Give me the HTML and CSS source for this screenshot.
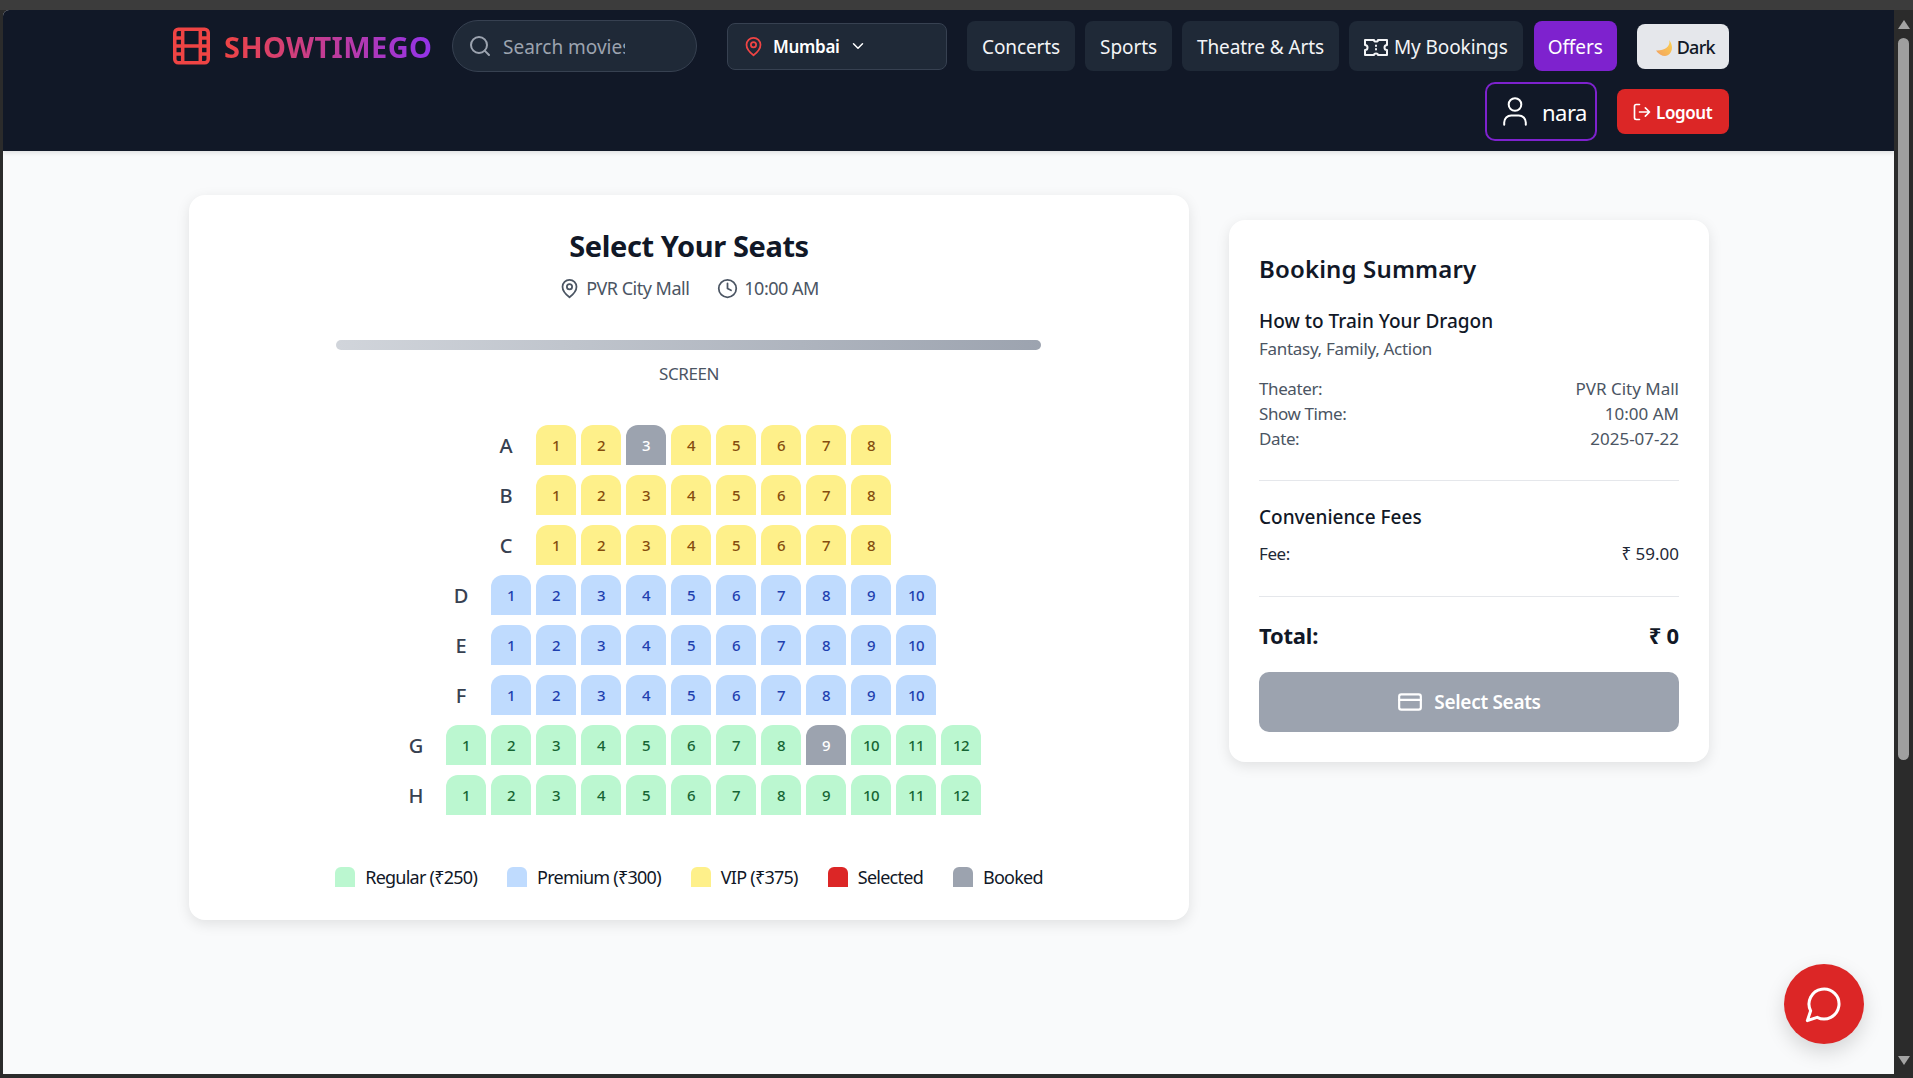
FILE: index.html
```html
<!DOCTYPE html>
<html lang="en">
<head>
    <meta charset="UTF-8">
    <meta name="viewport" content="width=device-width, initial-scale=1.0">
    <title>ShowTimeGo - Select Seats</title>
    <link rel="stylesheet" href="styles.css">
</head>
<body>
<div class="window">
    <div class="window-body">
        <div class="page">
            <!-- Navbar -->
            <header class="navbar">
                <div class="nav-row">
                    <a class="logo" href="#">
                        <svg class="logo-icon" viewBox="1.5 1.5 21 21"><rect x="2.5" y="2.5" width="19" height="19" rx="2"/><path d="M7 3v18M17 3v18M3 12h18M3 7.5h4M3 16.5h4M17 7.5h4M17 16.5h4"/></svg>
                        <span class="logo-text">SHOWTIMEGO</span>
                    </a>
                    <label class="search">
                        <svg class="icon search-icon" viewBox="0 0 24 24"><circle cx="11" cy="11" r="8"/><path d="m21 21-4.35-4.35"/></svg>
                        <input type="text" placeholder="Search movies...">
                    </label>
                    <div class="location">
                        <svg class="icon pin-red" viewBox="0 0 24 24"><path d="M20 10c0 6-8 12-8 12s-8-6-8-12a8 8 0 0 1 16 0Z"/><circle cx="12" cy="10" r="3"/></svg>
                        <span class="location-name">Mumbai</span>
                        <svg class="icon chevron" viewBox="0 0 24 24"><path d="m6 9 6 6 6-6"/></svg>
                    </div>
                    <nav class="nav-links">
                        <a class="nav-link" href="#">Concerts</a>
                        <a class="nav-link" href="#">Sports</a>
                        <a class="nav-link" href="#">Theatre &amp; Arts</a>
                        <a class="nav-link" href="#">
                            <svg class="icon ticket" viewBox="0 0 24 17"><path d="M1 1h9a2 1.6 0 0 0 4 0h9v5a2.5 2.5 0 0 0 0 5v5h-9a2 1.6 0 0 0-4 0H1v-5a2.5 2.5 0 0 0 0-5Z"/><path d="M12 6.5v.6M12 10v.6"/></svg>
                            My Bookings
                        </a>
                        <a class="nav-link nav-offers" href="#">Offers</a>
                    </nav>
                    <button class="theme-btn">
                        <svg class="moon" viewBox="0 0 18 16"><defs><linearGradient id="moonfill" x1="1" y1="0" x2="0" y2="1"><stop offset="0" stop-color="#fcd34d"/><stop offset="1" stop-color="#f2a062"/></linearGradient></defs><path d="M13 0C15 5 10 11 0 10.5 2 14 6 16 9 16 15 16 19 7 13 0Z" fill="url(#moonfill)"/></svg>
                        Dark
                    </button>
                </div>
                <div class="nav-row nav-row-user">
                    <a class="user-chip" href="#">
                        <svg class="icon user-icon" viewBox="0 0 24 29"><circle cx="12" cy="7.5" r="6.3"/><path d="M1.2 27.8v-2.4a7 7 0 0 1 7-7h7.6a7 7 0 0 1 7 7v2.4"/></svg>
                        nara
                    </a>
                    <button class="logout-btn">
                        <svg class="icon logout-icon" viewBox="0 0 24 24"><path d="M9 21H5a2 2 0 0 1-2-2V5a2 2 0 0 1 2-2h4"/><path d="m16 17 5-5-5-5M21 12H9"/></svg>
                        Logout
                    </button>
                </div>
            </header>

            <main class="content">
                <!-- Seat map -->
                <section class="seat-card">
                    <h1 class="seat-title">Select Your Seats</h1>
                    <div class="seat-meta">
                        <span class="meta-item"><svg class="icon meta-icon" viewBox="0 0 24 24"><path d="M20 10c0 6-8 12-8 12s-8-6-8-12a8 8 0 0 1 16 0Z"/><circle cx="12" cy="10" r="3"/></svg>PVR City Mall</span>
                        <span class="meta-item"><svg class="icon meta-icon" viewBox="0 0 24 24"><circle cx="12" cy="12" r="10"/><path d="M12 6v6l4 2"/></svg>10:00 AM</span>
                    </div>
                    <div class="screen-bar"></div>
                    <div class="screen-label">SCREEN</div>

                    <div class="seat-rows">
                        <div class="seat-row"><span class="row-label">A</span><div class="seats vip"><span class="seat">1</span><span class="seat">2</span><span class="seat booked">3</span><span class="seat">4</span><span class="seat">5</span><span class="seat">6</span><span class="seat">7</span><span class="seat">8</span></div></div>
                        <div class="seat-row"><span class="row-label">B</span><div class="seats vip"><span class="seat">1</span><span class="seat">2</span><span class="seat">3</span><span class="seat">4</span><span class="seat">5</span><span class="seat">6</span><span class="seat">7</span><span class="seat">8</span></div></div>
                        <div class="seat-row"><span class="row-label">C</span><div class="seats vip"><span class="seat">1</span><span class="seat">2</span><span class="seat">3</span><span class="seat">4</span><span class="seat">5</span><span class="seat">6</span><span class="seat">7</span><span class="seat">8</span></div></div>
                        <div class="seat-row"><span class="row-label">D</span><div class="seats premium"><span class="seat">1</span><span class="seat">2</span><span class="seat">3</span><span class="seat">4</span><span class="seat">5</span><span class="seat">6</span><span class="seat">7</span><span class="seat">8</span><span class="seat">9</span><span class="seat">10</span></div></div>
                        <div class="seat-row"><span class="row-label">E</span><div class="seats premium"><span class="seat">1</span><span class="seat">2</span><span class="seat">3</span><span class="seat">4</span><span class="seat">5</span><span class="seat">6</span><span class="seat">7</span><span class="seat">8</span><span class="seat">9</span><span class="seat">10</span></div></div>
                        <div class="seat-row"><span class="row-label">F</span><div class="seats premium"><span class="seat">1</span><span class="seat">2</span><span class="seat">3</span><span class="seat">4</span><span class="seat">5</span><span class="seat">6</span><span class="seat">7</span><span class="seat">8</span><span class="seat">9</span><span class="seat">10</span></div></div>
                        <div class="seat-row"><span class="row-label">G</span><div class="seats regular"><span class="seat">1</span><span class="seat">2</span><span class="seat">3</span><span class="seat">4</span><span class="seat">5</span><span class="seat">6</span><span class="seat">7</span><span class="seat">8</span><span class="seat booked">9</span><span class="seat">10</span><span class="seat">11</span><span class="seat">12</span></div></div>
                        <div class="seat-row"><span class="row-label">H</span><div class="seats regular"><span class="seat">1</span><span class="seat">2</span><span class="seat">3</span><span class="seat">4</span><span class="seat">5</span><span class="seat">6</span><span class="seat">7</span><span class="seat">8</span><span class="seat">9</span><span class="seat">10</span><span class="seat">11</span><span class="seat">12</span></div></div>
                    </div>

                    <div class="legend">
                        <span class="legend-item"><i class="swatch sw-regular"></i>Regular (₹250)</span>
                        <span class="legend-item"><i class="swatch sw-premium"></i>Premium (₹300)</span>
                        <span class="legend-item"><i class="swatch sw-vip"></i>VIP (₹375)</span>
                        <span class="legend-item"><i class="swatch sw-selected"></i>Selected</span>
                        <span class="legend-item"><i class="swatch sw-booked"></i>Booked</span>
                    </div>
                </section>

                <!-- Summary -->
                <aside class="summary-card">
                    <h2 class="summary-title">Booking Summary</h2>
                    <h3 class="movie-name">How to Train Your Dragon</h3>
                    <p class="movie-genre">Fantasy, Family, Action</p>
                    <div class="details">
                        <div class="detail-row"><span>Theater:</span><span>PVR City Mall</span></div>
                        <div class="detail-row"><span>Show Time:</span><span>10:00 AM</span></div>
                        <div class="detail-row"><span>Date:</span><span>2025-07-22</span></div>
                    </div>
                    <div class="fees">
                        <h3 class="fees-title">Convenience Fees</h3>
                        <div class="detail-row fee-row"><span>Fee:</span><span>₹ 59.00</span></div>
                    </div>
                    <div class="total-row"><span>Total:</span><span>₹ 0</span></div>
                    <button class="pay-btn">
                        <svg class="icon card-icon" viewBox="0 0 24 24"><rect x="2" y="5" width="20" height="14" rx="2"/><path d="M2 10h20"/></svg>
                        Select Seats
                    </button>
                </aside>
            </main>

            <button class="chat-btn"><svg class="icon chat-icon" viewBox="0 0 24 24"><path d="M7.9 20A9 9 0 1 0 4 16.1L2 22Z"/></svg></button>
        </div>

        <!-- Browser scrollbar -->
        <div class="scrollbar">
            <span class="arrow-up"></span>
            <span class="thumb"></span>
            <span class="arrow-down"></span>
        </div>
    </div>
</div>
</body>
</html>
```

FILE: styles.css
```css
* {
    box-sizing: border-box;
}

body, html {
    margin: 0;
    padding: 0;
    height: 100%;
    overflow: hidden;
    font-family: "Noto Sans", Arial, sans-serif;
    background-color: #2b2b2b;
}

h1, h2, h3, p {
    margin: 0;
}

a {
    text-decoration: none;
    color: inherit;
}

button {
    font-family: inherit;
    border: none;
}

.icon {
    fill: none;
    stroke: currentColor;
    stroke-width: 2;
    stroke-linecap: round;
    stroke-linejoin: round;
    flex-shrink: 0;
}

/* Window frame */
.window {
    height: 1078px;
    padding: 10px 0 4px 3px;
    background: linear-gradient(#3c3c3c 0, #3c3c3c 10px, #2b2b2b 10px);
}

.window-body {
    display: flex;
    height: 100%;
}

.page {
    position: relative;
    width: 1891px;
    height: 100%;
    background-color: #f9fafb;
    overflow: hidden;
    border-top-left-radius: 6px;
}

/* Scrollbar */
.scrollbar {
    flex: 1;
    display: flex;
    flex-direction: column;
    align-items: center;
    padding-top: 10px;
}

.arrow-up {
    width: 0;
    height: 0;
    border-left: 6px solid transparent;
    border-right: 6px solid transparent;
    border-bottom: 9px solid #a3a3a3;
}

.thumb {
    width: 11px;
    height: 722px;
    margin-top: 9px;
    border-radius: 6px;
    background-color: #9f9f9f;
}

.arrow-down {
    width: 0;
    height: 0;
    margin-top: auto;
    margin-bottom: 9px;
    border-left: 6px solid transparent;
    border-right: 6px solid transparent;
    border-top: 9px solid #a3a3a3;
}

/* Navbar */
.navbar {
    height: 141px;
    padding: 10px 165px 10px 170px;
    background-color: #111827;
    box-shadow: 0 2px 4px rgba(0, 0, 0, 0.1);
    color: #fff;
}

.nav-row {
    display: flex;
    align-items: center;
    height: 52px;
}

.nav-row-user {
    height: 59px;
    margin-top: 10px;
    justify-content: flex-end;
    gap: 20px;
}

.logo {
    display: flex;
    align-items: center;
    gap: 14px;
    width: 259px;
}

.logo-icon {
    width: 37px;
    height: 38px;
    fill: none;
    stroke: #ef4444;
    stroke-width: 2;
    stroke-linejoin: round;
    flex-shrink: 0;
}

.logo-text {
    font-size: 29px;
    font-weight: 700;
    letter-spacing: 0.4px;
    white-space: nowrap;
    background: linear-gradient(to right, #ef4444, #9333ea);
    -webkit-background-clip: text;
    background-clip: text;
    color: transparent;
}

.search {
    display: flex;
    align-items: center;
    gap: 11px;
    width: 245px;
    height: 52px;
    margin-left: 20px;
    padding-left: 15px;
    border: 1px solid #374151;
    border-radius: 26px;
    background-color: #1f2937;
}

.search-icon {
    width: 24px;
    height: 24px;
    color: #9ca3af;
}

.search input {
    width: 122px;
    padding: 2px 0 0;
    border: none;
    outline: none;
    background: transparent;
    color: #fff;
    font-family: inherit;
    font-size: 19px;
}

.search input::placeholder {
    color: #9ca3af;
}

.location {
    display: flex;
    align-items: center;
    width: 220px;
    height: 47px;
    margin-left: 30px;
    padding-left: 15px;
    border: 1px solid #374151;
    border-radius: 8px;
    background-color: #1f2937;
}

.pin-red {
    width: 21px;
    height: 21px;
    color: #ef4444;
}

.location-name {
    margin-left: 9px;
    font-size: 17px;
    font-weight: 600;
    letter-spacing: -0.3px;
}

.chevron {
    width: 18px;
    height: 18px;
    margin-left: 9px;
}

.nav-links {
    display: flex;
    gap: 10px;
    margin-left: 20px;
}

.nav-link {
    display: flex;
    align-items: center;
    gap: 6px;
    height: 50px;
    padding: 2px 15px 0;
    border-radius: 8px;
    background-color: #1f2937;
    color: #f3f4f6;
    font-size: 19px;
    letter-spacing: -0.1px;
    white-space: nowrap;
}

.nav-offers {
    margin-left: 1px;
    padding: 2px 14px 0;
    background-color: #7e22ce;
    color: #fff;
}

.ticket {
    width: 24px;
    height: 17px;
}

.theme-btn {
    display: flex;
    align-items: center;
    gap: 3px;
    height: 45px;
    width: 92px;
    margin-left: 20px;
    padding: 1px 0 0 19px;
    border-radius: 8px;
    background-color: #e5e7eb;
    color: #111827;
    font-size: 18px;
    font-weight: 500;
    letter-spacing: -0.7px;
}

.moon {
    width: 18px;
    height: 16px;
    margin-top: 3px;
    flex-shrink: 0;
}

.user-chip {
    display: flex;
    align-items: center;
    gap: 15px;
    width: 112px;
    height: 59px;
    padding-left: 16px;
    border: 2px solid #7e22ce;
    border-radius: 10px;
    font-size: 22px;
    letter-spacing: -0.5px;
}

.user-icon {
    width: 24px;
    height: 29px;
}

.logout-btn {
    display: flex;
    align-items: center;
    gap: 4px;
    width: 112px;
    height: 45px;
    padding: 1px 0 0 15px;
    border-radius: 8px;
    background-color: #dc2626;
    color: #fff;
    font-size: 17px;
    font-weight: 600;
    letter-spacing: -0.4px;
}

.logout-icon {
    width: 20px;
    height: 20px;
}

/* Main layout */
.content {
    display: flex;
    align-items: flex-start;
    gap: 40px;
    padding: 44px 0 0 186px;
}

.seat-card {
    width: 1000px;
    padding: 31px 0 33px;
    border-radius: 16px;
    background-color: #fff;
    box-shadow: 0 4px 14px rgba(0, 0, 0, 0.1);
}

.seat-title {
    font-size: 29px;
    font-weight: 700;
    line-height: 40px;
    letter-spacing: -0.4px;
    text-align: center;
    color: #111827;
}

.seat-meta {
    display: flex;
    justify-content: center;
    gap: 28px;
    margin-top: 8px;
    color: #4b5563;
    font-size: 18px;
    line-height: 28px;
    letter-spacing: -0.5px;
}

.meta-item {
    display: flex;
    align-items: center;
    gap: 6px;
}

.meta-icon {
    width: 21px;
    height: 21px;
}

.screen-bar {
    width: 705px;
    height: 10px;
    margin: 38px 0 0 147px;
    border-radius: 5px;
    background: linear-gradient(to right, #d1d5db, #9ca3af);
}

.screen-label {
    margin-top: 10px;
    font-size: 17px;
    line-height: 28px;
    letter-spacing: -0.4px;
    text-align: center;
    color: #4b5563;
}

.seat-rows {
    display: flex;
    flex-direction: column;
    gap: 10px;
    margin-top: 37px;
}

.seat-row {
    display: flex;
    justify-content: center;
    align-items: center;
    gap: 11px;
}

.row-label {
    width: 38px;
    text-align: center;
    font-size: 20px;
    font-weight: 500;
    color: #374151;
}

.seats {
    display: flex;
    gap: 5px;
}

.seat {
    display: flex;
    align-items: center;
    justify-content: center;
    width: 40px;
    height: 40px;
    border-radius: 12px 12px 0 0;
    font-size: 15px;
    font-weight: 500;
    letter-spacing: -0.5px;
}

.vip .seat {
    background-color: #fef08a;
    color: #854d0e;
}

.premium .seat {
    background-color: #bfdbfe;
    color: #1e40af;
}

.regular .seat {
    background-color: #bbf7d0;
    color: #166534;
}

.seats .booked {
    background-color: #9ca3af;
    color: #fff;
}

.legend {
    display: flex;
    justify-content: center;
    gap: 30px;
    margin-top: 52px;
    font-size: 18px;
    line-height: 20px;
    letter-spacing: -0.75px;
    color: #111827;
}

.legend-item {
    display: flex;
    align-items: center;
    gap: 10px;
}

.swatch {
    width: 20px;
    height: 20px;
    border-radius: 6px 6px 0 0;
}

.sw-regular { background-color: #bbf7d0; }
.sw-premium { background-color: #bfdbfe; }
.sw-vip { background-color: #fef08a; }
.sw-selected { background-color: #dc2626; }
.sw-booked { background-color: #9ca3af; }

/* Booking summary */
.summary-card {
    width: 480px;
    margin-top: 25px;
    padding: 30px;
    border-radius: 16px;
    background-color: #fff;
    box-shadow: 0 4px 14px rgba(0, 0, 0, 0.1);
    color: #4b5563;
}

.summary-title {
    margin-top: 3px;
    font-size: 24px;
    font-weight: 600;
    line-height: 32px;
    letter-spacing: 0.15px;
    color: #111827;
}

.movie-name {
    margin-top: 22px;
    font-size: 19px;
    font-weight: 500;
    line-height: 28px;
    color: #111827;
}

.movie-genre {
    margin-top: 1px;
    font-size: 17px;
    line-height: 25px;
    letter-spacing: -0.3px;
}

.details {
    padding: 15px 0 29px;
    border-bottom: 1px solid #e5e7eb;
}

.detail-row {
    display: flex;
    justify-content: space-between;
    font-size: 17px;
    line-height: 25px;
    letter-spacing: -0.4px;
}

.detail-row span:last-child {
    letter-spacing: 0;
}

.fees {
    padding: 22px 0 30px;
    border-bottom: 1px solid #e5e7eb;
}

.fees-title {
    font-size: 19px;
    font-weight: 500;
    line-height: 28px;
    color: #111827;
}

.fee-row {
    margin-top: 10px;
    color: #1f2937;
}

.total-row {
    display: flex;
    justify-content: space-between;
    margin-top: 22px;
    font-size: 22px;
    font-weight: 700;
    line-height: 32px;
    letter-spacing: -0.2px;
    color: #111827;
}

.pay-btn {
    display: flex;
    align-items: center;
    justify-content: center;
    gap: 11px;
    width: 100%;
    height: 60px;
    margin-top: 21px;
    padding-top: 1px;
    border-radius: 10px;
    background-color: #9ca3af;
    color: #fff;
    font-size: 19px;
    font-weight: 600;
    letter-spacing: -0.3px;
}

.card-icon {
    width: 26px;
    height: 26px;
}

/* Chat */
.chat-btn {
    position: absolute;
    right: 30px;
    bottom: 30px;
    display: flex;
    align-items: center;
    justify-content: center;
    width: 80px;
    height: 80px;
    border-radius: 50%;
    background-color: #dc2626;
    box-shadow: 0 8px 20px rgba(0, 0, 0, 0.15);
    color: #fff;
}

.chat-icon {
    width: 40px;
    height: 40px;
    stroke-width: 1.8;
}
```
